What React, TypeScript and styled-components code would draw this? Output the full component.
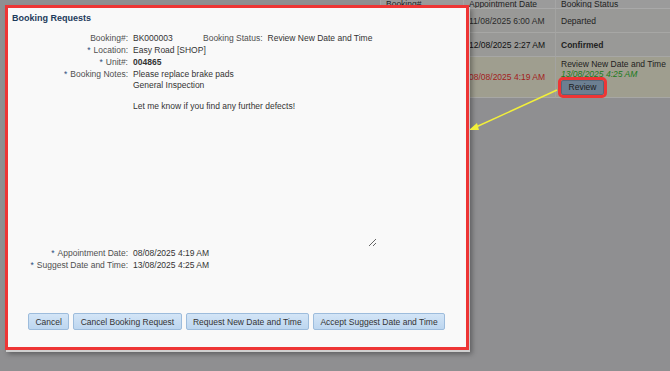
import React from "react";
import styled, { createGlobalStyle } from "styled-components";

const GlobalStyle = createGlobalStyle`
  body {
    margin: 0;
    background: #8f8f91;
    font-family: "Liberation Sans", Arial, sans-serif;
    font-size: 8.5px;
  }
`;

const Page = styled.div`
  position: relative;
  width: 670px;
  height: 371px;
  overflow: hidden;
  background: #8f8f91;
`;

// background list, dimmed behind the dialog
const Table = styled.div`
  margin-left: 380px;
  display: grid;
  grid-template-columns: 83px 92px 1fr;
`;

const HeadCell = styled.div`
  height: 8px;
  line-height: 8px;
  overflow: hidden;
  padding-left: 5px;
  background: #9b9b9b;
  color: #1e1e1e;
  border-bottom: 1px solid #a9a9a9;
  border-left: 1px solid #a5a5a5;
`;

const Cell = styled.div<{ $tall?: boolean; $warn?: boolean }>`
  height: ${(p) => (p.$tall ? 40 : 23)}px;
  padding-left: 5px;
  display: flex;
  flex-direction: column;
  justify-content: center;
  background: ${(p) => (p.$warn ? "#9f9e8f" : "#999997")};
  border-bottom: 1px solid #a7a7a5;
  border-left: 1px solid #a3a3a1;
  color: #262626;
  white-space: nowrap;
`;

const DateText = styled.span<{ $late?: boolean; $strong?: boolean }>`
  color: ${(p) => (p.$late ? "#a32020" : p.$strong ? "#111" : "#2a2a2a")};
`;

const StatusText = styled.span<{ $strong?: boolean }>`
  font-weight: ${(p) => (p.$strong ? "bold" : "normal")};
  color: #222;
`;

const Suggested = styled.span`
  color: #1b7a1b;
  font-style: italic;
`;

const ReviewButton = styled.button`
  margin: 1px 0 1px;
  width: 43px;
  height: 15px;
  padding: 0;
  font: inherit;
  color: #1c1c1c;
  background: #6c7f92;
  border: 1px solid #56687a;
  border-radius: 2px;
  outline: 3px solid #ee3535;
  outline-offset: 0;
`;

// dialog
const Modal = styled.div`
  position: absolute;
  left: 5px;
  top: 5px;
  width: 458px;
  height: 339px;
  background: #f9f9f9;
  border: 3px solid #ee3535;
  box-shadow: 1px 2px 0 #cfcfcf, 3px 4px 5px rgba(0, 0, 0, 0.35);
  display: flex;
  flex-direction: column;
`;

const Title = styled.div`
  padding: 4px 0 0 4px;
  height: 15px;
  line-height: 12px;
  font-weight: bold;
  font-size: 9px;
  color: #1d3b5c;
`;

const Form = styled.div`
  margin-top: 5px;
  display: grid;
  grid-template-columns: 120px 1fr;
  column-gap: 5px;
  align-items: start;
`;

const Label = styled.div`
  text-align: right;
  color: #4f4f4f;
  line-height: 12px;
  white-space: nowrap;
`;

const Star = styled.span`
  color: #2c4f7c;
  margin-right: 3px;
`;

const Value = styled.div<{ $bold?: boolean }>`
  line-height: 12px;
  color: #333;
  font-weight: ${(p) => (p.$bold ? "bold" : "normal")};
  display: flex;
  white-space: nowrap;
`;

const InlineValue = styled.span`
  width: 70px;
`;

const InlineLabel = styled.span`
  color: #4f4f4f;
  margin-right: 5px;
`;

const Notes = styled.textarea`
  margin: 0 0 0 -2px;
  width: 242px;
  height: 178px;
  padding: 1px 2px 0;
  border: none;
  outline: none;
  background: transparent;
  font-family: "Liberation Sans", Arial, sans-serif;
  font-size: 8.5px;
  line-height: 10.7px;
  color: #333;
  resize: both;
`;

const Footer = styled.div`
  margin-top: auto;
  padding: 0 0 17px 20px;
  display: flex;
  gap: 4px;
`;

const Btn = styled.button`
  height: 17px;
  padding: 0 6.4px;
  font: inherit;
  color: #333;
  background: linear-gradient(#d3e5f7, #bdd6ef);
  border: 1px solid #9dbcdc;
  border-radius: 2px;
  white-space: nowrap;
`;

const Arrow = styled.svg`
  position: absolute;
  left: 0;
  top: 0;
  pointer-events: none;
`;

export default function App() {
  const notes =
    "Please replace brake pads\nGeneral Inspection\n\nLet me know if you find any further defects!";

  return (
    <Page>
      <GlobalStyle />
      <Table>
        <HeadCell>Booking#</HeadCell>
        <HeadCell>Appointment Date</HeadCell>
        <HeadCell>Booking Status</HeadCell>

        <Cell>BK000001</Cell>
        <Cell>
          <DateText>11/08/2025 6:00 AM</DateText>
        </Cell>
        <Cell>
          <StatusText>Departed</StatusText>
        </Cell>

        <Cell>BK000002</Cell>
        <Cell>
          <DateText $strong>12/08/2025 2:27 AM</DateText>
        </Cell>
        <Cell>
          <StatusText $strong>Confirmed</StatusText>
        </Cell>

        <Cell $tall $warn>BK000003</Cell>
        <Cell $tall $warn>
          <DateText $late>08/08/2025 4:19 AM</DateText>
        </Cell>
        <Cell $tall $warn>
          <StatusText>Review New Date and Time</StatusText>
          <Suggested>13/08/2025 4:25 AM</Suggested>
          <div>
            <ReviewButton>Review</ReviewButton>
          </div>
        </Cell>
      </Table>

      <Modal>
        <Title>Booking Requests</Title>
        <Form>
          <Label>Booking#:</Label>
          <Value>
            <InlineValue>BK000003</InlineValue>
            <InlineLabel>Booking Status:</InlineLabel>
            Review New Date and Time
          </Value>

          <Label>
            <Star>*</Star>Location:
          </Label>
          <Value>Easy Road [SHOP]</Value>

          <Label>
            <Star>*</Star>Unit#:
          </Label>
          <Value $bold>004865</Value>

          <Label>
            <Star>*</Star>Booking Notes:
          </Label>
          <Notes readOnly defaultValue={notes} />

          <Label>
            <Star>*</Star>Appointment Date:
          </Label>
          <Value>08/08/2025 4:19 AM</Value>

          <Label>
            <Star>*</Star>Suggest Date and Time:
          </Label>
          <Value>13/08/2025 4:25 AM</Value>
        </Form>

        <Footer>
          <Btn>Cancel</Btn>
          <Btn>Cancel Booking Request</Btn>
          <Btn>Request New Date and Time</Btn>
          <Btn>Accept Suggest Date and Time</Btn>
        </Footer>
      </Modal>

      <Arrow width="670" height="371" viewBox="0 0 670 371">
        <line x1="557" y1="90" x2="476" y2="127" stroke="#f2ef3a" strokeWidth="1.5" />
        <polygon points="469,130 477,123 479,130" fill="#f2ef3a" />
      </Arrow>
    </Page>
  );
}
